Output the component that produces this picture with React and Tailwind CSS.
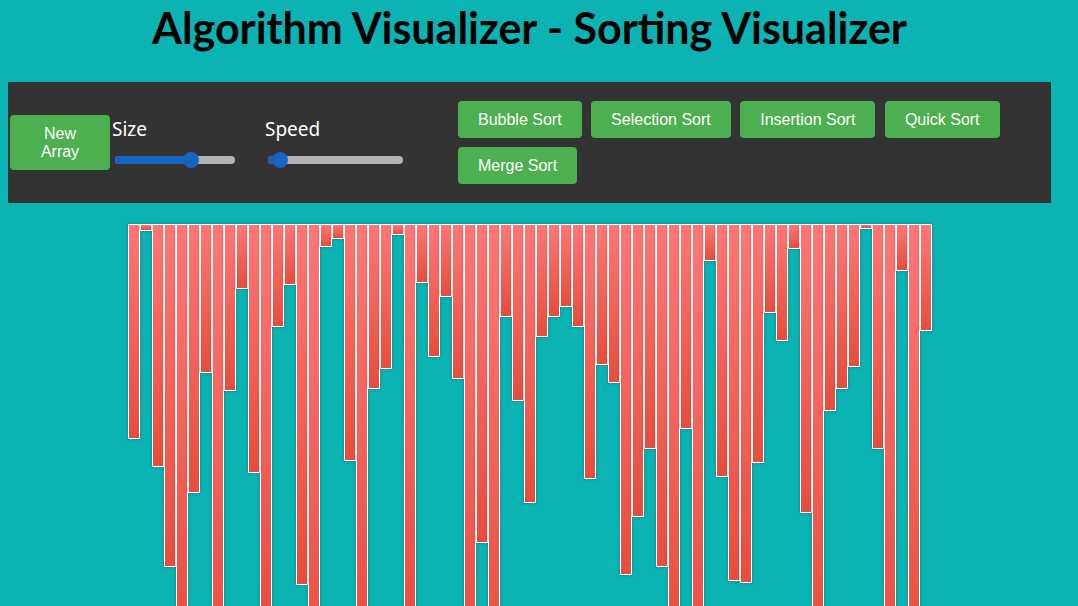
import React from "react";

const bars = [
  215, 7, 243, 343, 420, 269, 149, 450, 167, 65, 249, 400, 103, 61, 361, 470,
  23, 15, 237, 430, 165, 145, 11, 410, 59, 133, 73, 155, 440, 319, 460, 93,
  177, 279, 113, 93, 83, 103, 255, 141, 159, 351, 293, 225, 343, 415, 205, 455,
  37, 253, 357, 359, 239, 89, 117, 25, 289, 425, 187, 165, 143, 5, 225, 445,
  47, 435, 107,
];

const algos = ["Bubble Sort", "Selection Sort", "Insertion Sort", "Quick Sort", "Merge Sort"];

function Slider({ width, fill }) {
  return (
    <div className="relative h-4 flex items-center" style={{ width }}>
      <div className="h-[8px] w-full rounded-full bg-[#b3b3b3]" />
      <div className="absolute left-0 h-[8px] rounded-full bg-[#1565c0]" style={{ width: fill }} />
      <div
        className="absolute h-[16px] w-[16px] rounded-full bg-[#1565c0]"
        style={{ left: fill - 8 }}
      />
    </div>
  );
}

export default function App() {
  return (
    <div className="h-[606px] w-[1078px] overflow-hidden bg-[#0bb3b3]">
      <div className="w-[1059px]">
        {/* Title */}
        <h1 className="h-[82px] pt-[3px] text-center text-[43px] leading-[50px] font-bold text-black font-['Lato',sans-serif]">
          Algorithm Visualizer - Sorting Visualizer
        </h1>

        {/* Controls */}
        <div className="mx-2 flex h-[121px] items-center bg-[#333333]">
          <button className="ml-[2px] h-[55px] w-[100px] rounded bg-[#4caf50] px-5 text-[16px] leading-[18px] text-white font-['Liberation_Sans',Arial,sans-serif]">
            New Array
          </button>

          <div className="ml-[2px] flex w-[153px] flex-col">
            <span className="text-[19px] leading-[24px] text-white font-['Noto_Sans',sans-serif]">Size</span>
            <div className="mt-[11px] ml-[3px]">
              <Slider width={120} fill={76} />
            </div>
          </div>

          <div className="flex w-[193px] flex-col">
            <span className="text-[19px] leading-[24px] text-white font-['Noto_Sans',sans-serif]">Speed</span>
            <div className="mt-[11px] ml-[3px]">
              <Slider width={135} fill={12} />
            </div>
          </div>

          <div className="flex w-[580px] flex-wrap gap-x-[9.5px] gap-y-[9px]">
            {algos.map((a) => (
              <button
                key={a}
                className="h-[37px] rounded bg-[#4caf50] px-5 text-[16px] leading-[18px] text-white font-['Liberation_Sans',Arial,sans-serif]"
              >
                {a}
              </button>
            ))}
          </div>
        </div>

        {/* Bars */}
        <div className="mt-[21px] flex items-start pl-[128px]">
          {bars.map((h, i) => (
            <div
              key={i}
              className="w-[12px] border border-white bg-linear-to-b from-[#ff7675] to-[#e74c3c] shadow-[0_0_3px_rgba(0,0,0,0.25)]"
              style={{ height: h }}
            />
          ))}
        </div>
      </div>
    </div>
  );
}
